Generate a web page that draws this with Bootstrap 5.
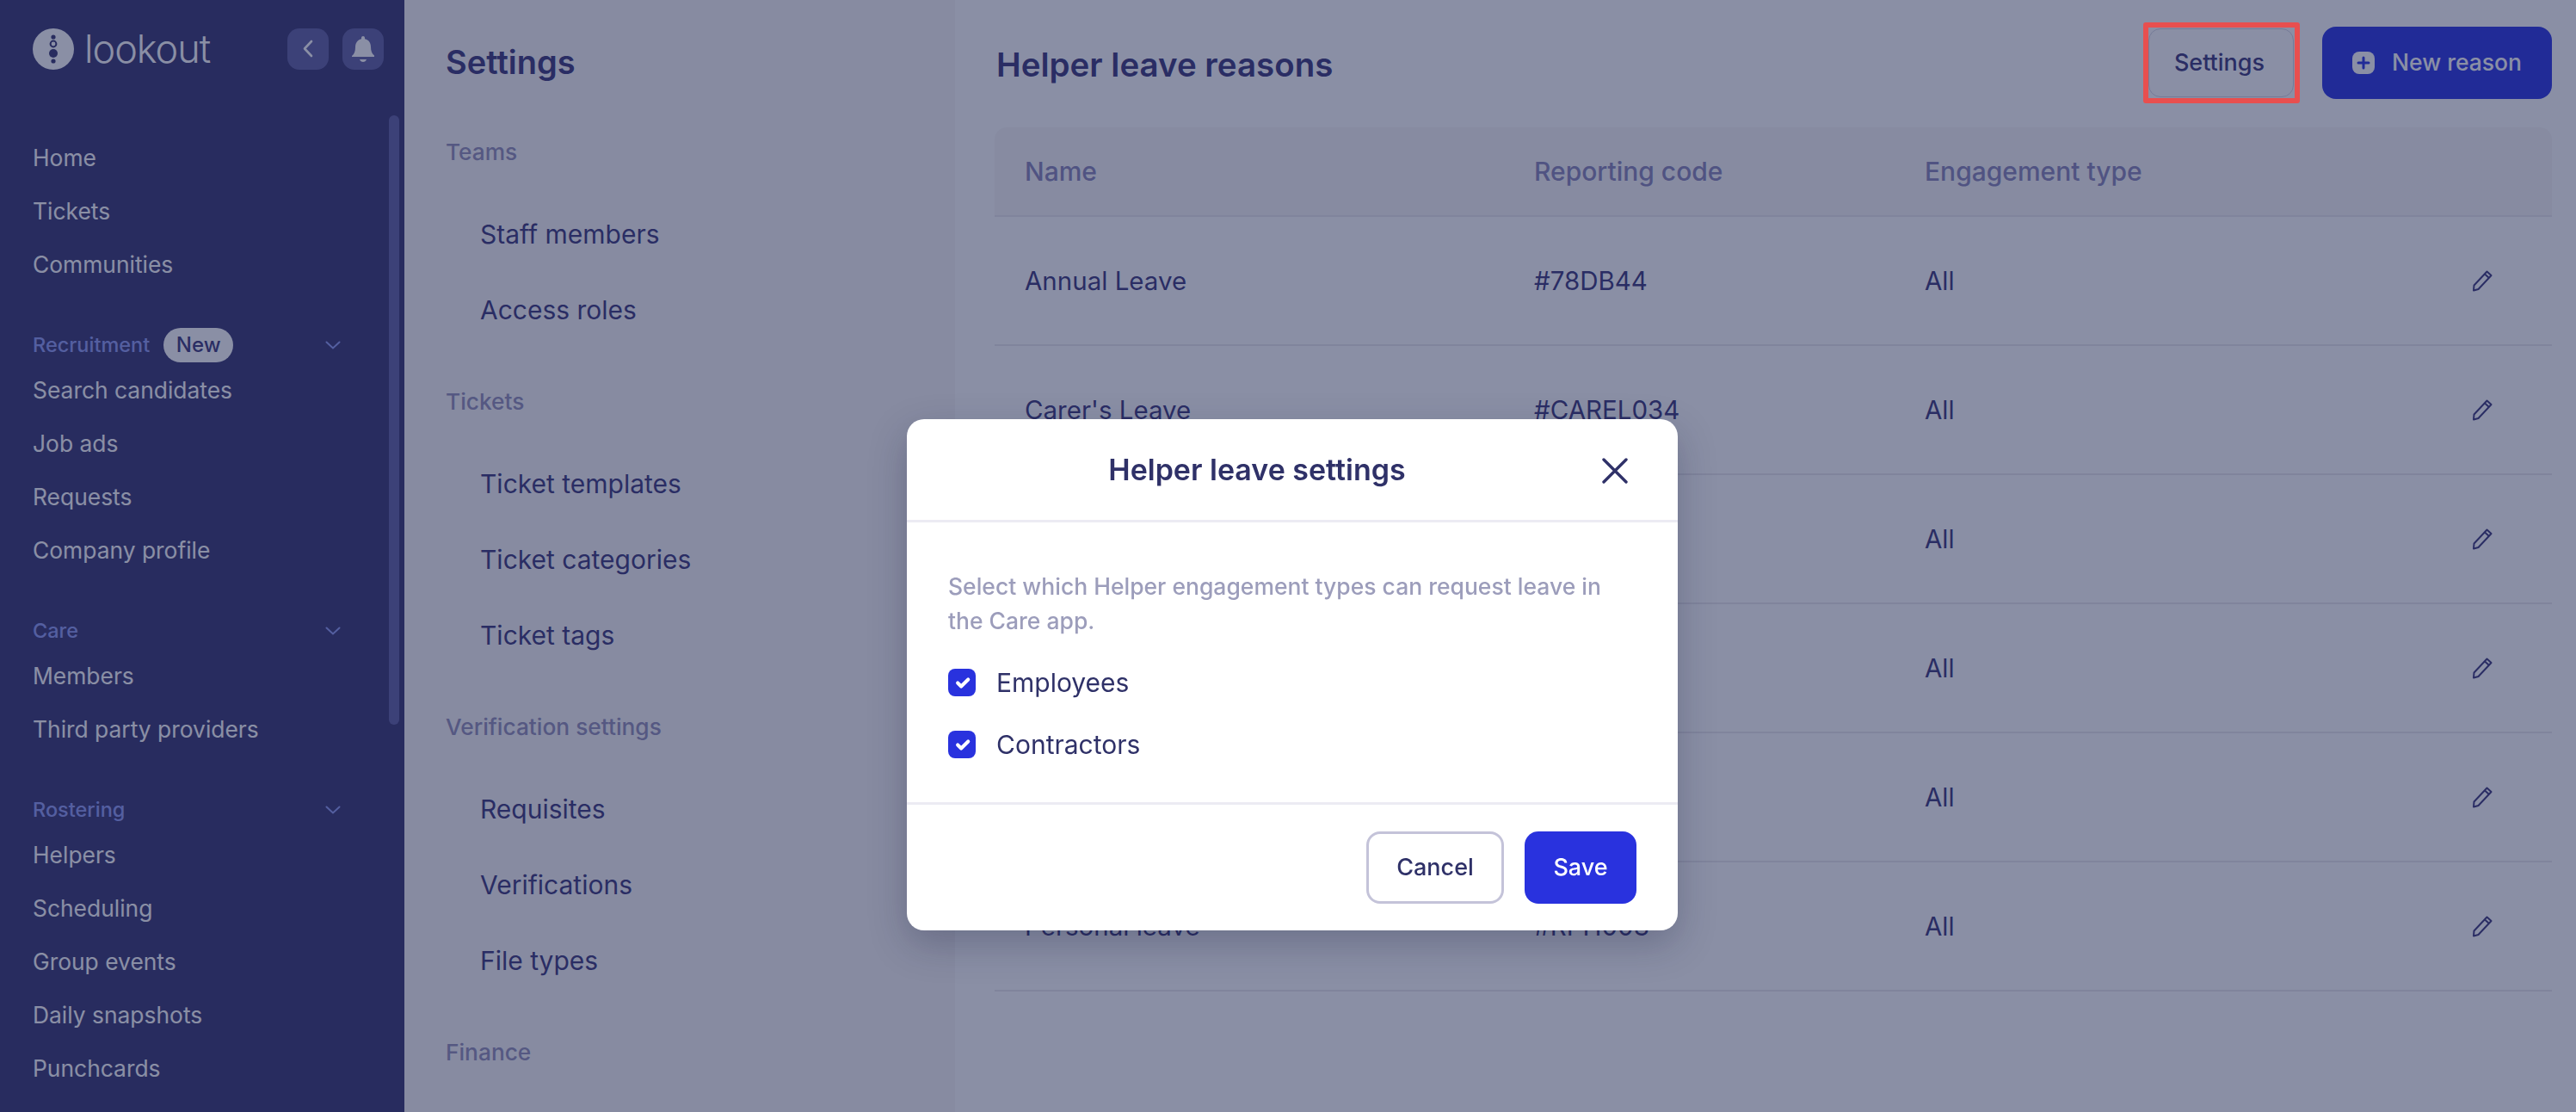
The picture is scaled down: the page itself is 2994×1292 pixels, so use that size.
<!DOCTYPE html>
<html lang="en">
<head>
    <meta charset="UTF-8">
    <title>Helper leave reasons</title>
    <link href="https://cdn.jsdelivr.net/npm/bootstrap@5.3.0/dist/css/bootstrap.min.css" rel="stylesheet">

    <style>
        body {
            height: 1292px;
            overflow: hidden;
            background: #fff;
            color: #3f3b7d;
            font-family: "Inter", "Liberation Sans", sans-serif;
        }
        /* left nav */
        .side-nav {
            width: 470px;
            height: 1292px;
            flex-shrink: 0;
            background: #3b3973;
            position: relative;
            padding: 33px 0 0 38px;
            color: #fff;
        }
        .logo-row { height: 119px; }
        .logo-name {
            font-size: 45px;
            font-weight: 300;
            line-height: 48px;
            margin-left: 12px;
            letter-spacing: -1px;
        }
        .side-square {
            width: 48px;
            height: 48px;
            border-radius: 14px;
            background: #6363a5;
        }
        .side-square-back { margin-left: auto; }
        .side-square-bell { margin-left: 16px; margin-right: 24px; }
        .side-scroll {
            position: absolute;
            left: 452px;
            top: 134px;
            width: 12px;
            height: 708px;
            border-radius: 6px;
            background: #6363a5;
        }
        .side-link {
            display: block;
            height: 62px;
            line-height: 62px;
            font-size: 26.400px;
            color: #fff;
            text-decoration: none;
        }
        .side-group {
            height: 43px;
            margin-top: 41px;
            width: 358px;
            font-size: 23.500px;
            font-weight: 500;
            color: #939ff5;
        }
        .side-new {
            background: #fff;
            color: #3f3b7d;
            font-size: 24px;
            font-weight: 500;
            line-height: 40px;
            height: 40px;
            width: 81px;
            text-align: center;
            border-radius: 20px;
            margin-left: 16px;
        }
        .side-chevron { margin-left: auto; }
        /* settings column */
        .settings-col {
            width: 640px;
            height: 1292px;
            flex-shrink: 0;
            background: #f8f6f6;
            padding: 42px 0 0 48px;
        }
        .settings-title {
            font-size: 38px;
            font-weight: 600;
            line-height: 60px;
            margin: 0 0 50px;
        }
        .settings-label {
            font-size: 26.300px;
            font-weight: 500;
            line-height: 50px;
            margin-bottom: 26px;
            color: #9591b9;
        }
        .settings-label-next { margin-top: 38px; }
        .settings-link {
            display: block;
            height: 88px;
            line-height: 88px;
            padding-left: 40px;
            font-size: 30px;
            color: #3f3b7d;
            text-decoration: none;
        }
        /* main list */
        .main-col {
            flex-grow: 1;
            padding: 31px 28px 0 46px;
        }
        .main-top { height: 84px; margin-bottom: 33px; }
        .main-title {
            font-size: 38.500px;
            font-weight: 600;
            line-height: 46px;
            margin: 3px 0 0 2px;
        }
        .settings-btn {
            position: relative;
            width: 169px;
            height: 80px;
            margin-right: 33px;
            padding: 0 14px 0 10px;
            font-size: 27px;
            font-weight: 500;
            color: #3f3b7d;
            background: #fff;
            border: 1px solid #d6d5e4;
            border-radius: 14px;
        }
        .red-box {
            position: absolute;
            left: -7px;
            top: -8px;
            width: 182px;
            height: 94px;
            border: 6px solid #e84f4f;
            border-radius: 3px;
            z-index: 1060;
        }
        .reason-btn {
            width: 267px;
            height: 84px;
            font-size: 26.500px;
            font-weight: 500;
            color: #fff;
            background: #2d37e3;
            border: 0;
            border-radius: 16px;
            gap: 20px;
        }
        .reason-table {
            table-layout: fixed;
            width: 1810px;
            margin: 0;
            font-size: 29.500px;
        }
        .reason-table th, .reason-table td {
            padding: 0 0 0 35px;
            vertical-align: middle;
            border-bottom: 2px solid #ebe9ed;
            color: #3f3b7d;
            background: transparent;
            box-shadow: none;
        }
        .reason-table th {
            height: 103px;
            font-size: 30px;
            font-weight: 500;
            color: #8b87b9;
            background: #f8f7f7;
        }
        .reason-table th:first-child { border-top-left-radius: 14px; }
        .reason-table th:last-child { border-top-right-radius: 14px; }
        .reason-table td { height: 150px; }
        .col-name { width: 592px; }
        .col-code { width: 454px; }
        .reason-table td.edit-cell { padding: 0 69px 0 0; text-align: right; }
        .edit-cell svg { margin-bottom: 4px; }
        /* modal */
        .dim-layer {
            --bs-backdrop-bg: rgb(21, 31, 75);
            --bs-backdrop-opacity: .5;
        }
        .leave-dialog {
            max-width: 896px;
            width: 896px;
            margin: 487px 0 0 1054px;
        }
        .leave-box {
            height: 594px;
            border: 0;
            border-radius: 20px;
            box-shadow: 0 16px 44px rgba(20, 22, 60, .25);
            color: #2f3168;
        }
        .leave-head {
            height: 120px;
            padding: 2px 58px 0 6px;
            border-bottom: 3px solid #ecebf3;
        }
        .leave-title {
            flex-grow: 1;
            text-align: center;
            font-size: 34px;
            font-weight: 600;
            margin: 0;
        }
        .leave-close { padding: 0; background: none; border: 0; line-height: 0; }
        .leave-body { padding: 54px 48px 0; height: 325px; flex: none; }
        .leave-note {
            font-size: 26.500px;
            font-weight: 500;
            line-height: 40px;
            color: #9c9dbb;
            margin-bottom: 32px;
        }
        .leave-check {
            display: flex;
            align-items: center;
            height: 40px;
            padding: 0;
            margin: 0 0 32px;
        }
        .leave-check .form-check-input {
            width: 32px;
            height: 32px;
            margin: 0 24px 0 0;
            float: none;
            border: 0;
            border-radius: 8px;
            background-color: #2932de;
            background-size: 27px;
        }
        .leave-check .form-check-label { font-size: 30px; color: #2f3168; opacity: 1; }
        .leave-foot {
            padding: 31px 48px 31px 0;
            border-top: 3px solid #ecebf3;
            gap: 24px;
            justify-content: flex-end;
        }
        .leave-foot > * { margin: 0; }
        .cancel-btn, .save-btn {
            height: 84px;
            font-size: 27px;
            font-weight: 500;
            border-radius: 16px;
        }
        .cancel-btn {
            width: 160px;
            color: #2f3168;
            background: #fff;
            border: 3px solid #c4c3d9;
        }
        .save-btn {
            width: 130px;
            color: #fff;
            background: #2932de;
            border: 0;
        }
    </style>
</head>
<body>

<div class="d-flex">
    <!-- Left nav -->
    <nav class="side-nav">
        <div class="logo-row d-flex align-items-start">
            <svg width="48" height="48" viewBox="0 0 48 48">
                <circle cx="24" cy="24" r="24" fill="#fff"/>
                <circle cx="24" cy="10" r="2.6" fill="#3b3973"/>
                <circle cx="24" cy="18" r="3.4" fill="none" stroke="#3b3973" stroke-width="2"/>
                <circle cx="24" cy="29" r="5" fill="#3b3973"/>
                <circle cx="24" cy="38" r="2.6" fill="#3b3973"/>
            </svg>
            <span class="logo-name">lookout</span>
            <span class="side-square side-square-back d-flex align-items-center justify-content-center">
                <svg width="14" height="24" viewBox="0 0 14 24" fill="none" stroke="#fff" stroke-width="2.6" stroke-linecap="round" stroke-linejoin="round"><path d="M11 3 3 11.500l8 8.500"/></svg>
            </span>
            <span class="side-square side-square-bell d-flex align-items-center justify-content-center">
                <svg width="28" height="32" viewBox="0 0 28 32" fill="#fff"><path d="M14 1c1.200 0 2 .8 2 2v1.200c4.600.9 7 4.700 7 9.300 0 5 1.300 7.700 4 10v1.500H1V24c2.700-2.300 4-5 4-10 0-4.900 2.400-8.900 7-9.800V3c0-1.200.8-2 2-2Z"/><path d="M10 28h8c-.6 1.800-2.200 3-4 3s-3.400-1.200-4-3Z"/></svg>
            </span>
        </div>
        <div class="side-scroll"></div>

        <a class="side-link" href="#">Home</a>
        <a class="side-link" href="#">Tickets</a>
        <a class="side-link" href="#">Communities</a>

        <div class="side-group d-flex align-items-center">
            <span>Recruitment</span><span class="side-new">New</span>
            <svg class="side-chevron" width="18" height="10" viewBox="0 0 18 10" fill="none" stroke="#939ff5" stroke-width="2" stroke-linecap="round"><path d="M1.500 1.500 9 8.500l7.500-7"/></svg>
        </div>
        <a class="side-link" href="#">Search candidates</a>
        <a class="side-link" href="#">Job ads</a>
        <a class="side-link" href="#">Requests</a>
        <a class="side-link" href="#">Company profile</a>

        <div class="side-group d-flex align-items-center">
            <span>Care</span>
            <svg class="side-chevron" width="18" height="10" viewBox="0 0 18 10" fill="none" stroke="#939ff5" stroke-width="2" stroke-linecap="round"><path d="M1.500 1.500 9 8.500l7.500-7"/></svg>
        </div>
        <a class="side-link" href="#">Members</a>
        <a class="side-link" href="#">Third party providers</a>

        <div class="side-group d-flex align-items-center">
            <span>Rostering</span>
            <svg class="side-chevron" width="18" height="10" viewBox="0 0 18 10" fill="none" stroke="#939ff5" stroke-width="2" stroke-linecap="round"><path d="M1.500 1.500 9 8.500l7.500-7"/></svg>
        </div>
        <a class="side-link" href="#">Helpers</a>
        <a class="side-link" href="#">Scheduling</a>
        <a class="side-link" href="#">Group events</a>
        <a class="side-link" href="#">Daily snapshots</a>
        <a class="side-link" href="#">Punchcards</a>
    </nav>

    <!-- Settings menu -->
    <aside class="settings-col">
        <h2 class="settings-title">Settings</h2>

        <div class="settings-label">Teams</div>
        <a class="settings-link" href="#">Staff members</a>
        <a class="settings-link" href="#">Access roles</a>

        <div class="settings-label settings-label-next">Tickets</div>
        <a class="settings-link" href="#">Ticket templates</a>
        <a class="settings-link" href="#">Ticket categories</a>
        <a class="settings-link" href="#">Ticket tags</a>

        <div class="settings-label settings-label-next">Verification settings</div>
        <a class="settings-link" href="#">Requisites</a>
        <a class="settings-link" href="#">Verifications</a>
        <a class="settings-link" href="#">File types</a>

        <div class="settings-label settings-label-next">Finance</div>
    </aside>

    <!-- Reasons list -->
    <main class="main-col">
        <div class="main-top d-flex align-items-center">
            <h1 class="main-title me-auto">Helper leave reasons</h1>
            <button class="btn settings-btn">Settings<span class="red-box"></span></button>
            <button class="btn reason-btn d-flex align-items-center justify-content-center">
                <svg width="26" height="26" viewBox="0 0 26 26"><rect width="26" height="26" rx="8" fill="#fff"/><path d="M13 7v12M7 13h12" stroke="#2d37e3" stroke-width="3" stroke-linecap="round"/></svg>
                New reason
            </button>
        </div>

        <table class="table reason-table">
            <colgroup><col class="col-name"><col class="col-code"><col></colgroup>
            <thead>
                <tr><th>Name</th><th>Reporting code</th><th>Engagement type</th><th></th></tr>
            </thead>
            <tbody id="reasonRows"></tbody>
        </table>
    </main>
</div>

<!-- Helper leave settings modal -->
<div class="modal-backdrop show dim-layer"></div>
<div class="modal d-block">
    <div class="modal-dialog leave-dialog">
        <div class="modal-content leave-box">
            <div class="modal-header leave-head">
                <h5 class="leave-title">Helper leave settings</h5>
                <button class="leave-close" aria-label="Close">
                    <svg width="30" height="30" viewBox="0 0 30 30" fill="none" stroke="#2f3168" stroke-width="3.400" stroke-linecap="round"><path d="M2 2l26 26M28 2 2 28"/></svg>
                </button>
            </div>
            <div class="modal-body leave-body">
                <p class="leave-note">Select which Helper engagement types can request leave in the Care app.</p>
                <div class="form-check leave-check">
                    <input class="form-check-input" type="checkbox" id="employees" checked>
                    <label class="form-check-label" for="employees">Employees</label>
                </div>
                <div class="form-check leave-check">
                    <input class="form-check-input" type="checkbox" id="contractors" checked>
                    <label class="form-check-label" for="contractors">Contractors</label>
                </div>
            </div>
            <div class="modal-footer leave-foot">
                <button class="btn cancel-btn">Cancel</button>
                <button class="btn save-btn">Save</button>
            </div>
        </div>
    </div>
</div>

<script src="https://cdn.jsdelivr.net/npm/bootstrap@5.3.0/dist/js/bootstrap.bundle.min.js"></script>

<script>
    // rows 3 to 5 sit behind the modal, only the type column shows
    const rows = [
        ["Annual Leave", "#78DB44"],
        ["Carer's Leave", "#CAREL034"],
        ["", ""],
        ["", ""],
        ["", ""],
        ["Personal leave", "#RPH003"]
    ];
    const pencil = '<svg width="24" height="25" viewBox="0 0 24 25" fill="none" stroke="#3f3b7d" stroke-width="2" stroke-linejoin="round"><path d="M17.500 1.500 22.500 6 7.500 22 2 23.500 2.500 17.500Z"/><path d="M15 4.500 20 9"/></svg>';
    document.getElementById("reasonRows").innerHTML = rows.map(function(r) {
        return "<tr><td>" + r[0] + "</td><td>" + r[1] + "</td><td>All</td><td class=\"edit-cell\">" + pencil + "</td></tr>";
    }).join("");
</script>

</body>
</html>
